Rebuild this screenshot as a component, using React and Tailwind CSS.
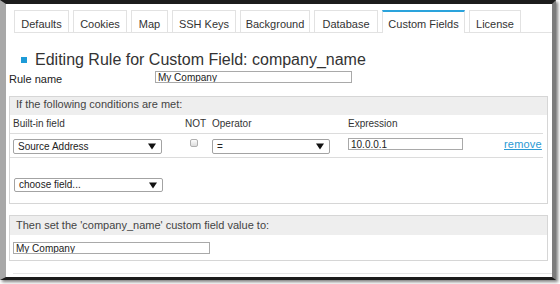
import React from 'react';

const tabs = [
  { label: 'Defaults', w: 'w-[55px]' },
  { label: 'Cookies', w: 'w-[54px]' },
  { label: 'Map', w: 'w-[37px]' },
  { label: 'SSH Keys', w: 'w-[64px]' },
  { label: 'Background', w: 'w-[70px]' },
  { label: 'Database', w: 'w-[64px]' },
  { label: 'Custom Fields', w: 'w-[83px]', active: true },
  { label: 'License', w: 'w-[52px]' },
];

const Caret = () => (
  <svg width="8" height="7" viewBox="0 0 8 7" className="shrink-0">
    <path d="M0 0.5h8L4 6.5z" fill="#111" />
  </svg>
);

const Select = ({ value, className }) => (
  <div
    className={`flex items-center justify-between border border-[#a3a3a3] rounded-[2px] bg-white pl-[4px] pr-[5px] text-[10px] leading-[12px] text-[#222] ${className}`}
  >
    <span>{value}</span>
    <Caret />
  </div>
);

const TextBox = ({ value, className }) => (
  <input
    readOnly
    value={value}
    className={`block border border-[#a9a9a9] bg-white px-[2px] py-0 text-[10px] leading-[10px] text-[#222] outline-none ${className}`}
  />
);

const App = () => {
  return (
    <div className="w-[560px] h-[284px] bg-white overflow-hidden font-['Liberation_Sans',Arial,sans-serif] text-[#333]">
      <div className="w-[556px] h-[280px] flex flex-col bg-white border-t-[4px] border-t-[#1c1c1c] border-b-[3px] border-b-[#1c1c1c] border-l-[6px] border-l-[#a8a8a8] border-r-[4px] border-r-[#7c7c7c] shadow-[2px_2px_3px_rgba(0,0,0,0.5)]">
        {/* tab strip */}
        <div className="ml-[8px] mt-[6px] flex items-end gap-[4px] border-b border-[#e2e2e2]">
          {tabs.map((t) =>
            t.active ? (
              <div
                key={t.label}
                className={`${t.w} h-[23px] -mb-px bg-white border border-b-0 border-[#e2e2e2] border-t-2 border-t-[#2aa3dc] pt-[6px] text-center text-[11px] leading-[12px] text-[#333]`}
              >
                {t.label}
              </div>
            ) : (
              <div
                key={t.label}
                className={`${t.w} h-[22px] border border-b-0 border-[#e2e2e2] pt-[7px] text-center text-[11px] leading-[12px] text-[#333]`}
              >
                {t.label}
              </div>
            )
          )}
        </div>

        <div className="pl-[3px]">
          {/* title */}
          <div className="mt-[17px] flex items-center h-[20px]">
            <span className="ml-[12px] mr-[8px] w-[6px] h-[6px] bg-[#1e9bd7]" />
            <span className="text-[16px] leading-[20px] text-[#333]">
              Editing Rule for Custom Field: company_name
            </span>
          </div>

          {/* rule name */}
          <div className="mt-[1px] h-[12px] flex items-start">
            <label className="w-[146px] mt-[2px] text-[11px] leading-[13px] text-[#222]">Rule name</label>
            <TextBox value="My Company" className="w-[197px] h-[12px]" />
          </div>

          {/* conditions */}
          <div className="mt-[13px] w-[539px] border border-[#d6d6d6]">
            <div className="h-[18px] bg-[#eeeeee] pl-[6px] pt-[1px] text-[11px] leading-[13px] text-[#444]">
              If the following conditions are met:
            </div>
            <div className="mr-[4px] h-[19px] flex border-b border-[#dcdcdc] pt-[3px] text-[10px] leading-[12px] text-[#333]">
              <div className="w-[175px] pl-[3px]">Built-in field</div>
              <div className="w-[27px]">NOT</div>
              <div className="w-[136px]">Operator</div>
              <div className="w-[156px]">Expression</div>
            </div>
            <div className="mr-[4px] h-[24px] flex items-start border-b border-[#dcdcdc]">
              <div className="w-[175px] pl-[3px] pt-[5px]">
                <Select value="Source Address" className="w-[149px] h-[15px]" />
              </div>
              <div className="w-[27px] pl-[5px] pt-[5px]">
                <div className="w-[8px] h-[8px] border border-[#b0b0b0] rounded-[2px] bg-gradient-to-b from-[#fdfdfd] to-[#dcdcdc]" />
              </div>
              <div className="w-[136px] pt-[5px]">
                <Select value="=" className="w-[118px] h-[15px]" />
              </div>
              <div className="w-[156px] pt-[4px]">
                <TextBox value="10.0.0.1" className="w-[115px] h-[12px]" />
              </div>
              <a className="mt-[4px] text-[11px] leading-[13px] tracking-[0.2px] text-[#2b9ad4] underline">remove</a>
            </div>
            <div className="pl-[4px] pt-[20px] pb-[11px]">
              <Select value="choose field..." className="w-[149px] h-[14px]" />
            </div>
          </div>

          {/* value */}
          <div className="mt-[11px] w-[539px] border border-[#d6d6d6]">
            <div className="h-[19px] bg-[#eeeeee] pl-[6px] pt-[3px] text-[11px] leading-[13px] text-[#444]">
              Then set the 'company_name' custom field value to:
            </div>
            <div className="pl-[3px] pt-[7px] pb-[6px]">
              <TextBox value="My Company" className="w-[197px] h-[12px]" />
            </div>
          </div>

          <div className="ml-[4px] mt-[12px] border-t border-[#e6e6e6]" />
        </div>
      </div>
    </div>
  );
};

export default App;
